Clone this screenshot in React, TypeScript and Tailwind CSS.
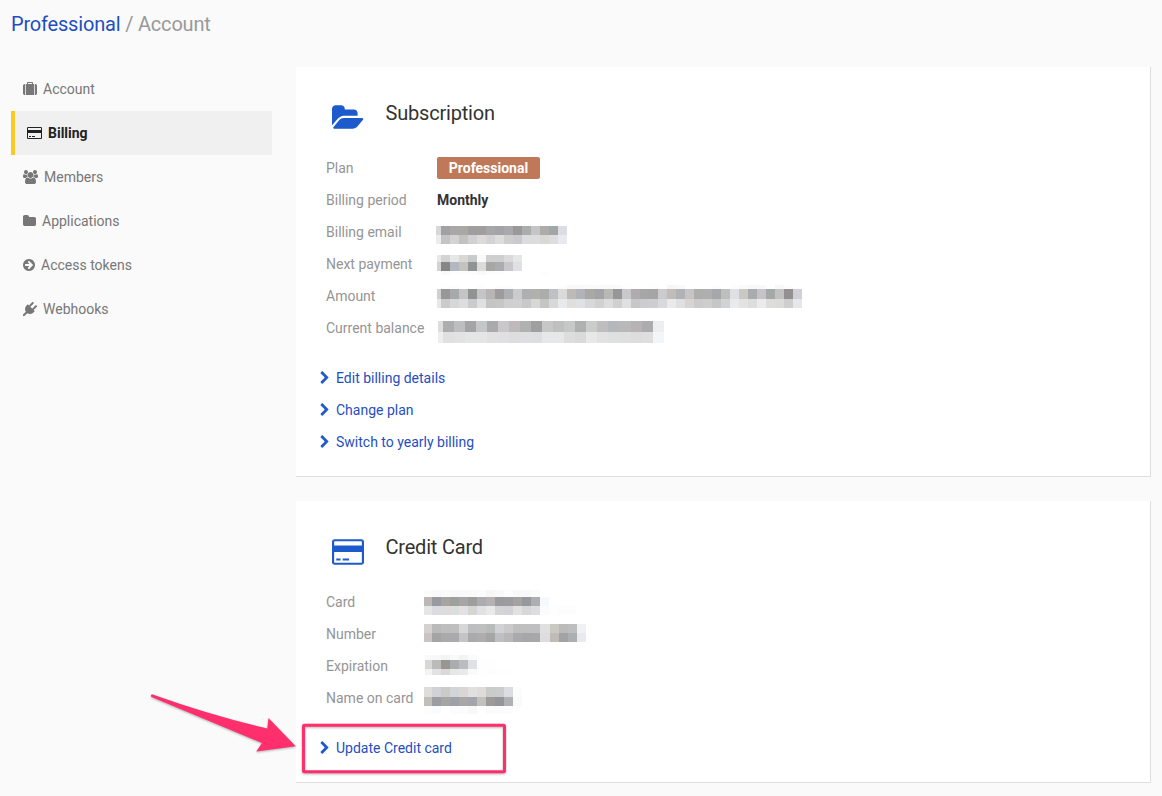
import type { ReactNode } from "react";

type IconProps = { d: string; vb: string; className: string };

function Icon({ d, vb, className }: IconProps) {
  return (
    <svg viewBox={vb} className={`shrink-0 overflow-visible fill-current ${className}`} aria-hidden="true">
      <path d={d} />
    </svg>
  );
}

const SUITCASE =
  "M640 256h512v-128h-512v128zm-352 0v1408h-64q-92 0-158-66t-66-158v-960q0-92 66-158t158-66h64zm1120 0v1408h-1024v-1408h128v-160q0-40 28-68t68-28h576q40 0 68 28t28 68v160h128zm384 224v960q0 92-66 158t-158 66h-64v-1408h64q92 0 158 66t66 158z";
const USERS =
  "M593 896q-162 5-265 128h-134q-82 0-138-40.500t-56-118.500q0-353 124-353 6 0 43.500 21t97.500 42.500 119 21.500q67 0 133-23-5 37-5 66 0 139 81 256zm1071 637q0 120-73 189.500t-194 69.500h-874q-121 0-194-69.500t-73-189.500q0-53 3.500-103.500t14-109 26.500-108.500 43-97.500 62-81 85.500-53.500 111.500-20q10 0 43 21.500t73 48 107 48 135 21.500 135-21.500 107-48 73-48 43-21.500q61 0 111.500 20t85.500 53.500 62 81 43 97.500 26.500 108.500 14 109 3.500 103.500zm-1024-1277q0 106-75 181t-181 75-181-75-75-181 75-181 181-75 181 75 75 181zm704 384q0 159-112.500 271.500t-271.500 112.500-271.500-112.500-112.500-271.500 112.500-271.500 271.500-112.500 271.500 112.500 112.500 271.500zm576 225q0 78-56 118.500t-138 40.500h-134q-103-123-265-128 81-117 81-256 0-29-5-66 66 23 133 23 59 0 119-21.500t97.500-42.500 43.500-21q124 0 124 353zm-128-609q0 106-75 181t-181 75-181-75-75-181 75-181 181-75 181 75 75 181z";
const FOLDER =
  "M1728 608v704q0 92-66 158t-158 66h-1216q-92 0-158-66t-66-158v-960q0-92 66-158t158-66h320q92 0 158 66t66 158v32h672q92 0 158 66t66 158z";
const ARROW_CIRCLE =
  "M1413 896q0-27-18-45l-91-91-362-362q-18-18-45-18t-45 18l-91 91q-18 18-18 45t18 45l189 189h-502q-26 0-45 19t-19 45v128q0 26 19 45t45 19h502l-189 189q-18 18-18 45t18 45l91 91q18 18 45 18t45-18l362-362 91-91q18-18 18-45zm251 0q0 209-103 385.500t-279.500 279.500-385.500 103-385.500-103-279.500-279.500-103-385.500 103-385.500 279.500-279.500 385.500-103 385.500 103 279.500 279.500 103 385.500z";
const PLUG =
  "M1755 453q37 38 37 90.500t-37 90.500l-401 400 150 150-160 160q-163 163-389.500 186.500t-411.500-100.500l-362 362h-181v-181l362-362q-124-185-100.500-411.500t186.500-389.500l160-160 150 150 400-401q38-37 91-37t90 37 37 90.500-37 90.500l-400 401 234 234 401-400q38-37 91-37t90 37z";
const FOLDER_OPEN =
  "M1879 952q0 31-31 66l-336 396q-43 51-120.500 86.500t-143.500 35.500h-1088q-34 0-60.500-13t-26.500-43q0-31 31-66l336-396q43-51 120.500-86.500t143.500-35.500h1088q34 0 60.500 13t26.500 43zm-343-344v160h-832q-94 0-197 47.500t-164 119.500l-337 396-5 6q0-4-.5-12.500t-.5-12.500v-960q0-92 66-158t158-66h320q92 0 158 66t66 158v32h544q92 0 158 66t66 158z";
const CHEVRON =
  "M1363 877l-742 742q-19 19-45 19t-45-19l-166-166q-19-19-19-45t19-45l531-531-531-531q-19-19-19-45t19-45l166-166q19-19 45-19t45 19l742 742q19 19 19 45t-19 45z";
const CREDIT_CARD =
  "M1760 128q66 0 113 47t47 113v1216q0 66-47 113t-113 47h-1600q-66 0-113-47t-47-113v-1216q0-66 47-113t113-47h1600zM160 256q-13 0-22.500 9.500t-9.500 22.500v224h1664v-224q0-13-9.500-22.500t-22.500-9.500h-1600zM1760 1536q13 0 22.500-9.500t9.500-22.500v-608h-1664v608q0 13 9.500 22.500t22.500 9.500h1600zM256 1408v-128h256v128h-256zM640 1408v-128h384v128h-384z";

/* Pixelated strip that hides a private value. Coordinates are relative to its row. */
type Strip = { x: number; first: number; cell: number; rows: { y: number; h: number; c: string }[] };

function Mosaic({ x, first, cell, rows }: Strip) {
  return (
    <svg width="380" height="32" className="block overflow-visible" shapeRendering="crispEdges" aria-hidden="true">
      {rows.map((r) =>
        r.c.split(" ").map((c, i) =>
          c === "-" ? null : (
            <rect
              key={`${r.y}-${i}`}
              x={i === 0 ? x : x + first + Math.round((i - 1) * cell)}
              y={r.y}
              width={i === 0 ? first : Math.round(i * cell) - Math.round((i - 1) * cell)}
              height={r.h}
              fill={`#${c}`}
            />
          ),
        ),
      )}
    </svg>
  );
}

const EMAIL: Strip = {
  x: -1, first: 5, cell: 9,
  rows: [
    { y: 10, h: 9, c: "d9d7d8 a0a1a5 a9a8a7 a9a8a4 a09e9f a09e9f a7a7a9 a5a4a5 a9a8aa 9a9899 abadac c5c4c6 aeacaa a3a6a7 dbdce4" },
    { y: 19, h: 9, c: "eeebeb c4c4c6 d3d3d3 c2c3c0 d1d1d3 dcdbd9 d3d3d5 dedddd cfcecd cacace dcdcdc dcdcdc d8d9d5 dddddf e9eaf0" },
  ],
};
const PAYMENT: Strip = {
  x: 0, first: 4, cell: 9,
  rows: [
    { y: 7, h: 7, c: "e9e8e8 d3d3d3 e5e8e7 d9d8d5 c8cacc f8f9f9 d0cfcf cfcfd0 dadada e5e6e6" },
    { y: 14, h: 9, c: "d6d2cf 858687 b3b7bf c5c1bd 919293 dbdbdc a7a8a3 abacb2 c9c7ca dfe0e3" },
    { y: 23, h: 4, c: "- fafafa fdfdfd fdfdfd fdfdfd f9f9f9 fdfdfd fdfdfd - - - - fdfdfd" },
  ],
};
const AMOUNT: Strip = {
  x: 0, first: 4, cell: 9.03,
  rows: [
    { y: 5, h: 4, c: "- fdfdfd fdfdfd - - fdfdfd - fdfdfd fdfdfd - - - - - fdfdfd f9f9f9 f9f9f9 fafafa fafafa f9f9f9 fafafa fdfdfd - - fdfdfd - f6f6f4 f9f9f9 - - - fdfdfd - fdfdfd fafafa f8f8f8 f9f9f9 - f8f8f8 fdfdfd" },
    { y: 9, h: 10, c: "d3cfce 989898 a7aaaa c4c4c4 919292 c4c5c8 b8b5b4 9e9b9c adafb1 cacbcd afafb0 b0b1ad acacac bec0c3 dadada bdbbb9 b1b3b8 aaa7a7 a3a4a8 bab8b7 979797 c9c9cc aeacae a6a6a7 a5a5a7 cbcbce c0bcba b0b2b5 c6c4c6 aeaeab aeafae a5a7a9 bdbfbe dfe0e3 cac7c5 a9acae c5c3c7 a6a7a7 c2c2c3 949091 cfd0d8" },
    { y: 19, h: 9, c: "e8e8e8 cbcbcc d6d7d8 dddddd cacbcc e0e0e1 c4c4c2 c5c6c6 cfcfcf d0d0d0 c8c8ca d7d7d7 c5c6c4 d7d8d8 e8e9ec e0dfdd e0e1e4 d8d8da d1d1d1 dcdcdc d0d0d1 e0e0e2 c7c7c7 cccbce cfcdd0 d8d9dd eaeaec e0e0e0 d7d5d4 cbcbcb cdcecd c5c7c7 d1d2d4 e8eaed e4e3e1 dcdedd ebebed dedddb dbdbda cecece e6e7eb" },
  ],
};
const BALANCE: Strip = {
  x: 1, first: 5, cell: 11.03,
  rows: [
    { y: 9, h: 11, c: "dddddd adadb0 bdbebf a4a4a7 c5c6c7 aaaaac cac7cb bebabc b0b2b1 9f9f9f c7c7c7 bdc0be c6c7c7 afb0b0 caccca c0bdc0 b5b8bb b9b9ba b7b3b5 acacaf edeef1" },
    { y: 20, h: 11, c: "eeeeee e0e0e0 e2e2e2 e4e5e5 e5e5e5 e1e1e1 e0e0e2 dddddd dfdfe1 dddee0 e6e7e8 e6e8e7 dddddd dadadb e7e8e8 e2e2e2 dfe0e0 dfdfdf dddddd dedede f4f5f9" },
  ],
};
const CARD: Strip = {
  x: 0, first: 8, cell: 9,
  rows: [
    { y: 4, h: 7, c: "fbfbfa f9f9f9 fafafa f9f9f9 f9f9f9 fafafa fbfbfb f6f6f4 f9f9f9 fdfdfd f9f9f9 f9f9f9 fbfbfb" },
    { y: 11, h: 9, c: "bcb7b4 999a9f a6a4a2 9da09d a6a6a8 9e9e9c acacae b5b1b2 9b9b9f 9c9c9e a4a2a2 97989b acaeb1 f7f8fb" },
    { y: 20, h: 9, c: "e6e6e6 dcdce0 dddbdc dcdedd e2e2e2 d5d5d3 e1e1e3 e9e9e9 d5d5d6 d3d3d5 e1e1df d7d7d8 dddddf fafbfb fefefe fdfdfd fdfdfd" },
  ],
};
const NUMBER: Strip = {
  x: 0, first: 8, cell: 9.04,
  rows: [
    { y: 6, h: 9, c: "d3d2d0 bababa bebebf bfbfc0 d7d7d7 bdbebf bfbfc0 b9bbba d1d2d5 cbc9cc bfbfbf bfbfc0 bfbfc2 e0e0e0 c9c8c2 bbbbbc bebebe f0f1f4" },
    { y: 15, h: 9, c: "c9c4c3 a4a4a5 aaaaac aaaaac c4c4c4 aaaaac adadb0 a5a5a5 bebfc1 bab7b9 aaaaad a7a7a8 a8a8aa dedcde c1bbb7 a3a3a4 adaeb1 e9eaed" },
  ],
};
const EXPIRATION: Strip = {
  x: 1, first: 7, cell: 9,
  rows: [
    { y: 5, h: 5, c: "f9f9f9 f8f8f8 f3f5f5 f9f9f9 f3f3f2 fbfbfb" },
    { y: 10, h: 9, c: "d7d7d5 bbbbb9 999691 abacaf bbbcbf e0e1e4 fefefe fefefe" },
    { y: 19, h: 6, c: "f4f4f3 e2e2e2 d9d9db e7e7e8 eaeaed fafafa fefefe fdfdfd fefefe fefefe" },
  ],
};
const NAME: Strip = {
  x: 0, first: 8, cell: 9,
  rows: [
    { y: 5, h: 10, c: "dfdddb d1d2d6 cbccc9 d3d4d7 d8d7d6 e0e0e0 dddcda cacbcb cbccce dcdde0 fbfcfc" },
    { y: 15, h: 9, c: "c2beba 9c9da2 a5a6a4 a0a1a6 aaa6a5 a4a5aa c1c1be 9c9b99 94959a b0b1b4 f9fafa" },
    { y: 24, h: 8, c: "fcfdfd fafbfb - fcfcfc fcfcfc f8f8f8 - fbfbfb fbfbfb fcfcfc" },
  ],
};

const NAV = [
  { label: "Account", d: SUITCASE, vb: "0 0 1792 1792", size: "h-[14px] w-[14px]" },
  { label: "Billing", d: CREDIT_CARD, vb: "0 0 1920 1792", size: "h-[14px] w-[15px]", active: true },
  { label: "Members", d: USERS, vb: "0 0 1920 1792", size: "h-[14px] w-[15px]" },
  { label: "Applications", d: FOLDER, vb: "64 0 1664 1792", size: "h-[14px] w-[13px]" },
  { label: "Access tokens", d: ARROW_CIRCLE, vb: "128 0 1536 1792", size: "h-[14px] w-[12px]" },
  { label: "Webhooks", d: PLUG, vb: "0 0 1792 1792", size: "h-[14px] w-[14px]" },
];

function Row({ label, width, children }: { label: string; width: string; children: ReactNode }) {
  return (
    <div className="flex h-8 items-center">
      <dt className={`shrink-0 text-[#959595] ${width}`}>{label}</dt>
      <dd className="text-[#333]">{children}</dd>
    </div>
  );
}

function ActionLink({ children }: { children: ReactNode }) {
  return (
    <li>
      <a href="#" className="flex h-8 items-center gap-[7px] text-[#1f4fbf]">
        <Icon d={CHEVRON} vb="346 0 1036 1792" className="h-[14px] w-[9px] text-[#1d5acb]" />
        {children}
      </a>
    </li>
  );
}

function Panel({ title, icon, className, children }: { title: string; icon: ReactNode; className: string; children: ReactNode }) {
  return (
    <section className={`border-r border-b border-[#dedede] bg-white pl-[30px] ${className}`}>
      <header className="flex h-[85px] pl-[6px]">
        <div className="w-[53.5px] pt-[36px] text-[#1d5acb]">{icon}</div>
        <h2 className="pt-[32px] text-[20px] leading-[28px] tracking-[-0.2px] text-[#333]">{title}</h2>
      </header>
      {children}
    </section>
  );
}

export default function App() {
  return (
    <div className="relative h-[796px] w-[1162px] overflow-hidden bg-[#fafafa] font-['Roboto',sans-serif] text-[14px] leading-5">
      <h1 className="h-[67px] pt-[10px] pl-[11px] text-[20px] leading-7 tracking-[-0.19px] text-[#999]">
        <a href="#" className="text-[#1f4fbf]">Professional</a> / Account
      </h1>
      <div className="flex pl-[11px]">
        <nav className="w-[261px]">
          {NAV.map((n) => (
            <a
              key={n.label}
              href="#"
              className={`flex h-11 items-center gap-[6px] pl-3 ${
                n.active ? "border-l-4 border-[#f9ca24] bg-[#f0f0f0] font-bold text-[#222]" : "text-[#777]"
              }`}
            >
              <Icon d={n.d} vb={n.vb} className={n.size} />
              {n.label}
            </a>
          ))}
        </nav>
        <main className="ml-6 flex w-[855px] flex-col gap-6">
          <Panel
            title="Subscription"
            className="h-[410px]"
            icon={<Icon d={FOLDER_OPEN} vb="0 0 1920 1792" className="h-[30px] w-[32px]" />}
          >
            <dl>
              <Row label="Plan" width="w-[111px]">
                <span className="flex h-[22px] w-[103px] items-center justify-center rounded-[2px] bg-[#bf7959] font-bold text-white">
                  Professional
                </span>
              </Row>
              <Row label="Billing period" width="w-[111px]"><strong className="font-bold">Monthly</strong></Row>
              <Row label="Billing email" width="w-[111px]"><Mosaic {...EMAIL} /></Row>
              <Row label="Next payment" width="w-[111px]"><Mosaic {...PAYMENT} /></Row>
              <Row label="Amount" width="w-[111px]"><Mosaic {...AMOUNT} /></Row>
              <Row label="Current balance" width="w-[111px]"><Mosaic {...BALANCE} /></Row>
            </dl>
            <ul className="-ml-[6px] pt-[18px]">
              <ActionLink>Edit billing details</ActionLink>
              <ActionLink>Change plan</ActionLink>
              <ActionLink>Switch to yearly billing</ActionLink>
            </ul>
          </Panel>
          <Panel
            title="Credit Card"
            className="h-[282px]"
            icon={<Icon d={CREDIT_CARD} vb="0 0 1920 1792" className="h-[30px] w-[32px]" />}
          >
            <dl>
              <Row label="Card" width="w-[98px]"><Mosaic {...CARD} /></Row>
              <Row label="Number" width="w-[98px]"><Mosaic {...NUMBER} /></Row>
              <Row label="Expiration" width="w-[98px]"><Mosaic {...EXPIRATION} /></Row>
              <Row label="Name on card" width="w-[98px]"><Mosaic {...NAME} /></Row>
            </dl>
            <ul className="-ml-[6px] pt-[18px]">
              <ActionLink>Update Credit card</ActionLink>
            </ul>
          </Panel>
        </main>
      </div>

      {/* Callout that points at the update link */}
      <svg className="pointer-events-none absolute top-[680px] left-[140px] drop-shadow-[0_1px_1px_rgba(0,0,0,0.3)]" width="380" height="106" aria-hidden="true">
        <path d="M12 14.200Q10 15.200 11.500 17L122 63L116.300 71.500L155.800 66.300L128.500 38L127.300 48.500Q70 35 12 14.200Z" fill="#ff2f6e" />
        <rect x="163.500" y="45.200" width="201" height="46.500" rx="1" fill="none" stroke="#ff2f6e" strokeWidth="3" />
      </svg>
    </div>
  );
}
